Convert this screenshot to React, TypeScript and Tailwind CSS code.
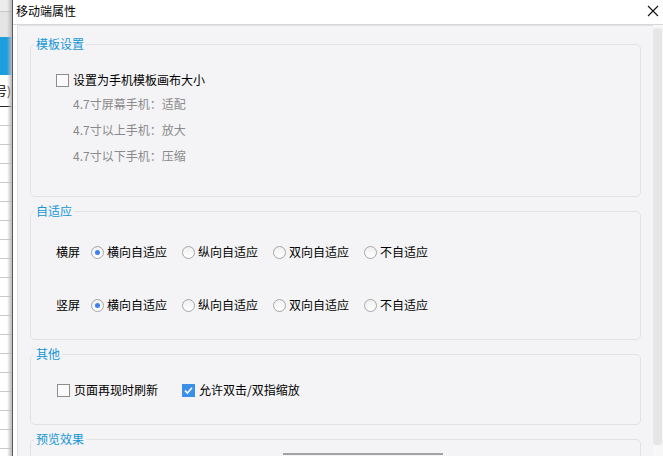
import React from 'react'

// 移动端属性 dialog
const cjk = "font-['Noto_Sans_CJK_SC','Liberation_Sans',sans-serif]"

function CheckBox({ checked, label }: { checked?: boolean; label: string }) {
  return (
    <div className="flex h-[18px] items-center">
      {checked ? (
        <span className="flex h-[13px] w-[13px] items-center justify-center bg-[#3a8fe8]">
          <svg width="11" height="11" viewBox="0 0 11 11">
            <path d="M2 5.6 L4.4 8 L9 2.8" fill="none" stroke="#fff" strokeWidth="1.6" />
          </svg>
        </span>
      ) : (
        <span className="h-[13px] w-[13px] border border-[#8c8c8c] bg-[#fbfbfb]" />
      )}
      <span className="ml-[4px] text-[12px] text-black">{label}</span>
    </div>
  )
}

function Radio({ checked, label }: { checked?: boolean; label: string }) {
  return (
    <div className="flex h-[18px] w-[91px] items-center">
      <span className="flex h-[13px] w-[13px] items-center justify-center rounded-full border border-[#a6a6a6] bg-gradient-to-b from-[#f0f0f0] to-[#ffffff]">
        {checked && <span className="h-[5px] w-[5px] rounded-full bg-[#3c82ef]" />}
      </span>
      <span className="ml-[3px] text-[12px] text-black">{label}</span>
    </div>
  )
}

function Group({ title, className, children }: { title: string; className: string; children?: React.ReactNode }) {
  return (
    <fieldset className={`mx-[12px] rounded-[5px] border border-[#e2e2e6] px-[3px] ${className}`}>
      <legend className="px-[2px] text-[12px] leading-[14px] text-[#1596d8]">{title}</legend>
      {children}
    </fieldset>
  )
}

const modes = ['横向自适应', '纵向自适应', '双向自适应', '不自适应']

export default function App() {
  return (
    <div className={`flex h-[456px] w-[663px] overflow-hidden bg-white ${cjk}`}>
      {/* background window peeking out on the left */}
      <div className="relative flex w-[13px] shrink-0 flex-col overflow-hidden border-r border-[#5a5a5a] bg-white">
        <div className="h-[12px] border-b border-[#c8c8c8] bg-[#ececec]" />
        <div className="h-[25px] bg-[#e4e4e4]" />
        <div className="h-[38px] bg-[#1d9fdf]" />
        <div className="flex h-[31px] items-center whitespace-nowrap">
          <span className="ml-[-5px] text-[12px] text-black">号)</span>
        </div>
        <div className="h-[1px] bg-[#222]" />
        {Array.from({ length: 18 }).map((_, i) => (
          <div key={i} className="h-[19px] border-b border-[#c9c9c9]" />
        ))}
        <div className="absolute inset-y-0 right-0 w-[5px] bg-gradient-to-r from-transparent to-[#b8b8b8]" />
      </div>

      {/* dialog */}
      <div className="flex min-w-0 flex-1 flex-col">
        <div className="flex h-[25px] shrink-0 items-center justify-between border-b border-[#d6d6db] pl-[3px] pr-[4px]">
          <span className="mt-[-3px] text-[12px] text-black">移动端属性</span>
          <svg width="12" height="12" viewBox="0 0 12 12" className="mt-[-2px]">
            <path d="M1 1 L11 11 M11 1 L1 11" stroke="#111" strokeWidth="1.1" />
          </svg>
        </div>

        <div className="flex min-h-0 flex-1 pl-[4px]">
          <div className="flex min-w-0 flex-1 flex-col gap-[7px] overflow-hidden border-l border-t border-[#e0e0e4] bg-[#f4f4f6] pt-[11px]">
            <Group title="模板设置" className="h-[160px] shrink-0">
              <div className="flex flex-col pl-[22px] pt-[20px]">
                <CheckBox label="设置为手机模板画布大小" />
                <div className="mt-[6px] flex flex-col gap-[8px] pl-[17px] text-[12px] leading-[18px] text-[#8a8a8a]">
                  <span>4.7寸屏幕手机：适配</span>
                  <span>4.7寸以上手机：放大</span>
                  <span>4.7寸以下手机：压缩</span>
                </div>
              </div>
            </Group>

            <Group title="自适应" className="h-[136px] shrink-0">
              <div className="flex flex-col gap-[35px] pl-[22px] pt-[25px]">
                {['横屏', '竖屏'].map(row => (
                  <div key={row} className="flex items-center">
                    <span className="w-[35px] text-[12px] text-black">{row}</span>
                    {modes.map((m, i) => (
                      <Radio key={m} label={m} checked={i === 0} />
                    ))}
                  </div>
                ))}
              </div>
            </Group>

            <Group title="其他" className="h-[78px] shrink-0">
              <div className="flex items-center pl-[23px] pt-[20px]">
                <div className="w-[125px]">
                  <CheckBox label="页面再现时刷新" />
                </div>
                <CheckBox label="允许双击/双指缩放" checked />
              </div>
            </Group>

            <Group title="预览效果" className="h-[60px] shrink-0">
              <div className="ml-[249px] mt-[7px] h-[2px] w-[160px] bg-[#a3a3a3]" />
            </Group>
          </div>

          {/* scrollbar */}
          <div className="flex w-[10px] shrink-0 flex-col bg-[#f7f7f7] pt-[3px]">
            <div className="h-[417px] w-[9px] rounded-[3px] bg-[#e6e6e6]" />
          </div>
        </div>
      </div>
    </div>
  )
}
